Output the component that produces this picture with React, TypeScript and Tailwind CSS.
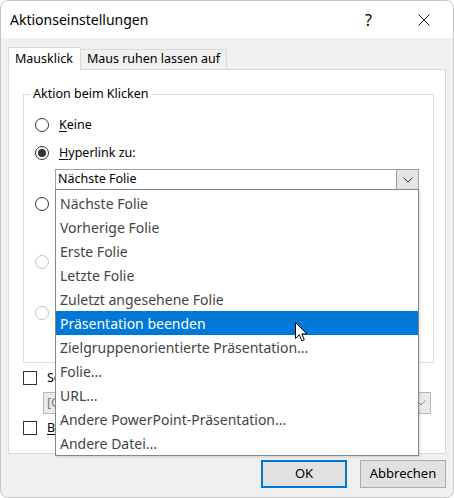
import React from "react";

const listItems = [
  "Nächste Folie",
  "Vorherige Folie",
  "Erste Folie",
  "Letzte Folie",
  "Zuletzt angesehene Folie",
  "Präsentation beenden",
  "Zielgruppenorientierte Präsentation...",
  "Folie...",
  "URL...",
  "Andere PowerPoint-Präsentation...",
  "Andere Datei...",
];

function Radio({ checked = false, disabled = false }: { checked?: boolean; disabled?: boolean }) {
  return (
    <span
      className={`flex h-[14px] w-[14px] shrink-0 items-center justify-center rounded-full border bg-white ${
        disabled ? "border-[#c4c4c4]" : "border-[#333333]"
      }`}
    >
      {checked && <span className="h-[8px] w-[8px] rounded-full bg-[#333333]" />}
    </span>
  );
}

function Checkbox() {
  return <span className="block h-[14px] w-[14px] shrink-0 border border-[#333333] bg-white" />;
}

function Chevron({ color = "#404040" }: { color?: string }) {
  return (
    <svg width="10" height="6" viewBox="0 0 10 6">
      <path d="M0.5 0.5 L5 5 L9.5 0.5" fill="none" stroke={color} strokeWidth="1" />
    </svg>
  );
}

function Cursor() {
  return (
    <svg width="13" height="21" viewBox="0 0 13 21">
      <path
        d="M0.5 0.5 L0.5 16.5 L4.3 12.8 L6.8 18.8 L9.3 17.8 L6.9 11.9 L12 11.9 Z"
        fill="#ffffff"
        stroke="#000000"
        strokeWidth="1"
        strokeLinejoin="miter"
      />
    </svg>
  );
}

export default function App() {
  return (
    <div className="relative h-[498px] w-[454px] bg-white font-['Noto_Sans',sans-serif] text-black">
      <div className="flex h-full flex-col overflow-hidden rounded-[8px] border border-[#c6c6c6] bg-[#f0f0f0]">
        {/* title bar */}
        <div className="flex h-[37px] shrink-0 items-center bg-white pl-[9px]">
          <span className="text-[14px] leading-none">Aktionseinstellungen</span>
          <span className="ml-auto mr-[46px] text-[16px] leading-none">?</span>
          <svg className="mr-[23px]" width="12" height="12" viewBox="0 0 12 12">
            <path d="M0.5 0.5 L11.5 11.5 M11.5 0.5 L0.5 11.5" stroke="#222222" strokeWidth="1" />
          </svg>
        </div>

        <div className="flex flex-1 flex-col px-[7px] pt-[9px]">
          {/* tabs */}
          <div className="flex h-[22px] items-end">
            <div className="relative z-10 -mb-px flex h-[23px] items-center border border-b-0 border-[#d9d9d9] bg-white pl-[6px] pr-[7px] text-[12.5px]">
              Mausklick
            </div>
            <div className="-ml-px flex h-[20px] items-center border border-b-0 border-[#d9d9d9] bg-[#f0f0f0] px-[6px] text-[12.5px]">
              Maus ruhen lassen auf
            </div>
          </div>

          {/* tab panel */}
          <div className="flex h-[385px] flex-col border border-[#d9d9d9] bg-white pl-[14px] pr-[11px] text-[12.5px]">
            <fieldset className="mt-[15px] h-[278px] border border-[#dcdcdc]">
              <legend className="ml-[6px] px-[3px] leading-[18px]">Aktion beim Klicken</legend>

              <div className="pl-[11px]">
                <div className="mt-[12px] flex h-[20px] items-center gap-[10px]">
                  <Radio />
                  <span>
                    <u className="underline-offset-2">K</u>eine
                  </span>
                </div>
                <div className="mt-[8px] flex h-[20px] items-center gap-[10px]">
                  <Radio checked />
                  <span>
                    <u className="underline-offset-2">H</u>yperlink zu:
                  </span>
                </div>
                <div className="ml-[20px] mt-[6px] flex h-[21px] w-[364px] items-center border border-[#a0a0a0] bg-white pl-[2px]">
                  <span className="flex-1">Nächste Folie</span>
                  <span className="flex h-full w-[22px] items-center justify-center border-l border-[#a0a0a0] bg-[#e5e5e5]">
                    <Chevron />
                  </span>
                </div>

                <div className="mt-[4px] flex h-[20px] items-center gap-[10px]">
                  <Radio />
                  <span>Programm ausführen:</span>
                </div>
                <div className="ml-[20px] mt-[6px] flex h-[22px] w-[364px] gap-[8px]">
                  <span className="flex-1 border border-[#cccccc] bg-[#f0f0f0]" />
                  <span className="w-[86px] border border-[#cccccc] bg-[#f0f0f0]" />
                </div>

                <div className="mt-[10px] flex h-[20px] items-center gap-[10px] text-[#a0a0a0]">
                  <Radio disabled />
                  <span>Makro ausführen:</span>
                </div>
                <div className="ml-[20px] mt-[5px] h-[21px] w-[364px] border border-[#cccccc] bg-[#f0f0f0]" />

                <div className="mt-[5px] flex h-[20px] items-center gap-[10px] text-[#a0a0a0]">
                  <Radio disabled />
                  <span>Objektaktion:</span>
                </div>
                <div className="ml-[20px] mt-[6px] h-[21px] w-[364px] border border-[#cccccc] bg-[#f0f0f0]" />
              </div>
            </fieldset>

            <div className="mt-[7px] flex h-[16px] items-center gap-[10px]">
              <Checkbox />
              <span>Sound abspielen:</span>
            </div>
            <div className="ml-[20px] mt-[6px] flex h-[22px] w-[388px] items-center border border-[#b8b8b8] bg-[#e9e9e9] pl-[3px] text-[#7a7a7a]">
              <span className="flex-1">[Ohne Sound]</span>
              <span className="flex w-[18px] items-center justify-center">
                <Chevron color="#8a8a8a" />
              </span>
            </div>
            <div className="mt-[6px] flex h-[16px] items-center gap-[10px]">
              <Checkbox />
              <span>
                <u className="underline-offset-2">B</u>eim Klicken markieren
              </span>
            </div>
          </div>

          {/* buttons */}
          <div className="mt-[6px] flex justify-end gap-[13px]">
            <button className="h-[28px] w-[86px] border-2 border-[#0078d7] bg-[#e1e1e1] text-[13px]">OK</button>
            <button className="h-[28px] w-[86px] border border-[#adadad] bg-[#e1e1e1] text-[13px]">Abbrechen</button>
          </div>
        </div>
      </div>

      {/* open dropdown list */}
      <div className="absolute left-[55px] top-[189px] h-[267px] w-[364px] border border-[#828790] bg-white pt-px shadow-[1px_1px_2px_rgba(0,0,0,0.15)]">
        {listItems.map((item) => {
          const active = item === "Präsentation beenden";
          return (
            <div
              key={item}
              className={`flex h-[24px] items-center pl-[4px] text-[14px] ${
                active ? "bg-[#0078d7] text-white" : "text-[#444444]"
              }`}
            >
              {item}
            </div>
          );
        })}
      </div>

      <div className="pointer-events-none absolute left-[295px] top-[322px]">
        <Cursor />
      </div>
    </div>
  );
}
